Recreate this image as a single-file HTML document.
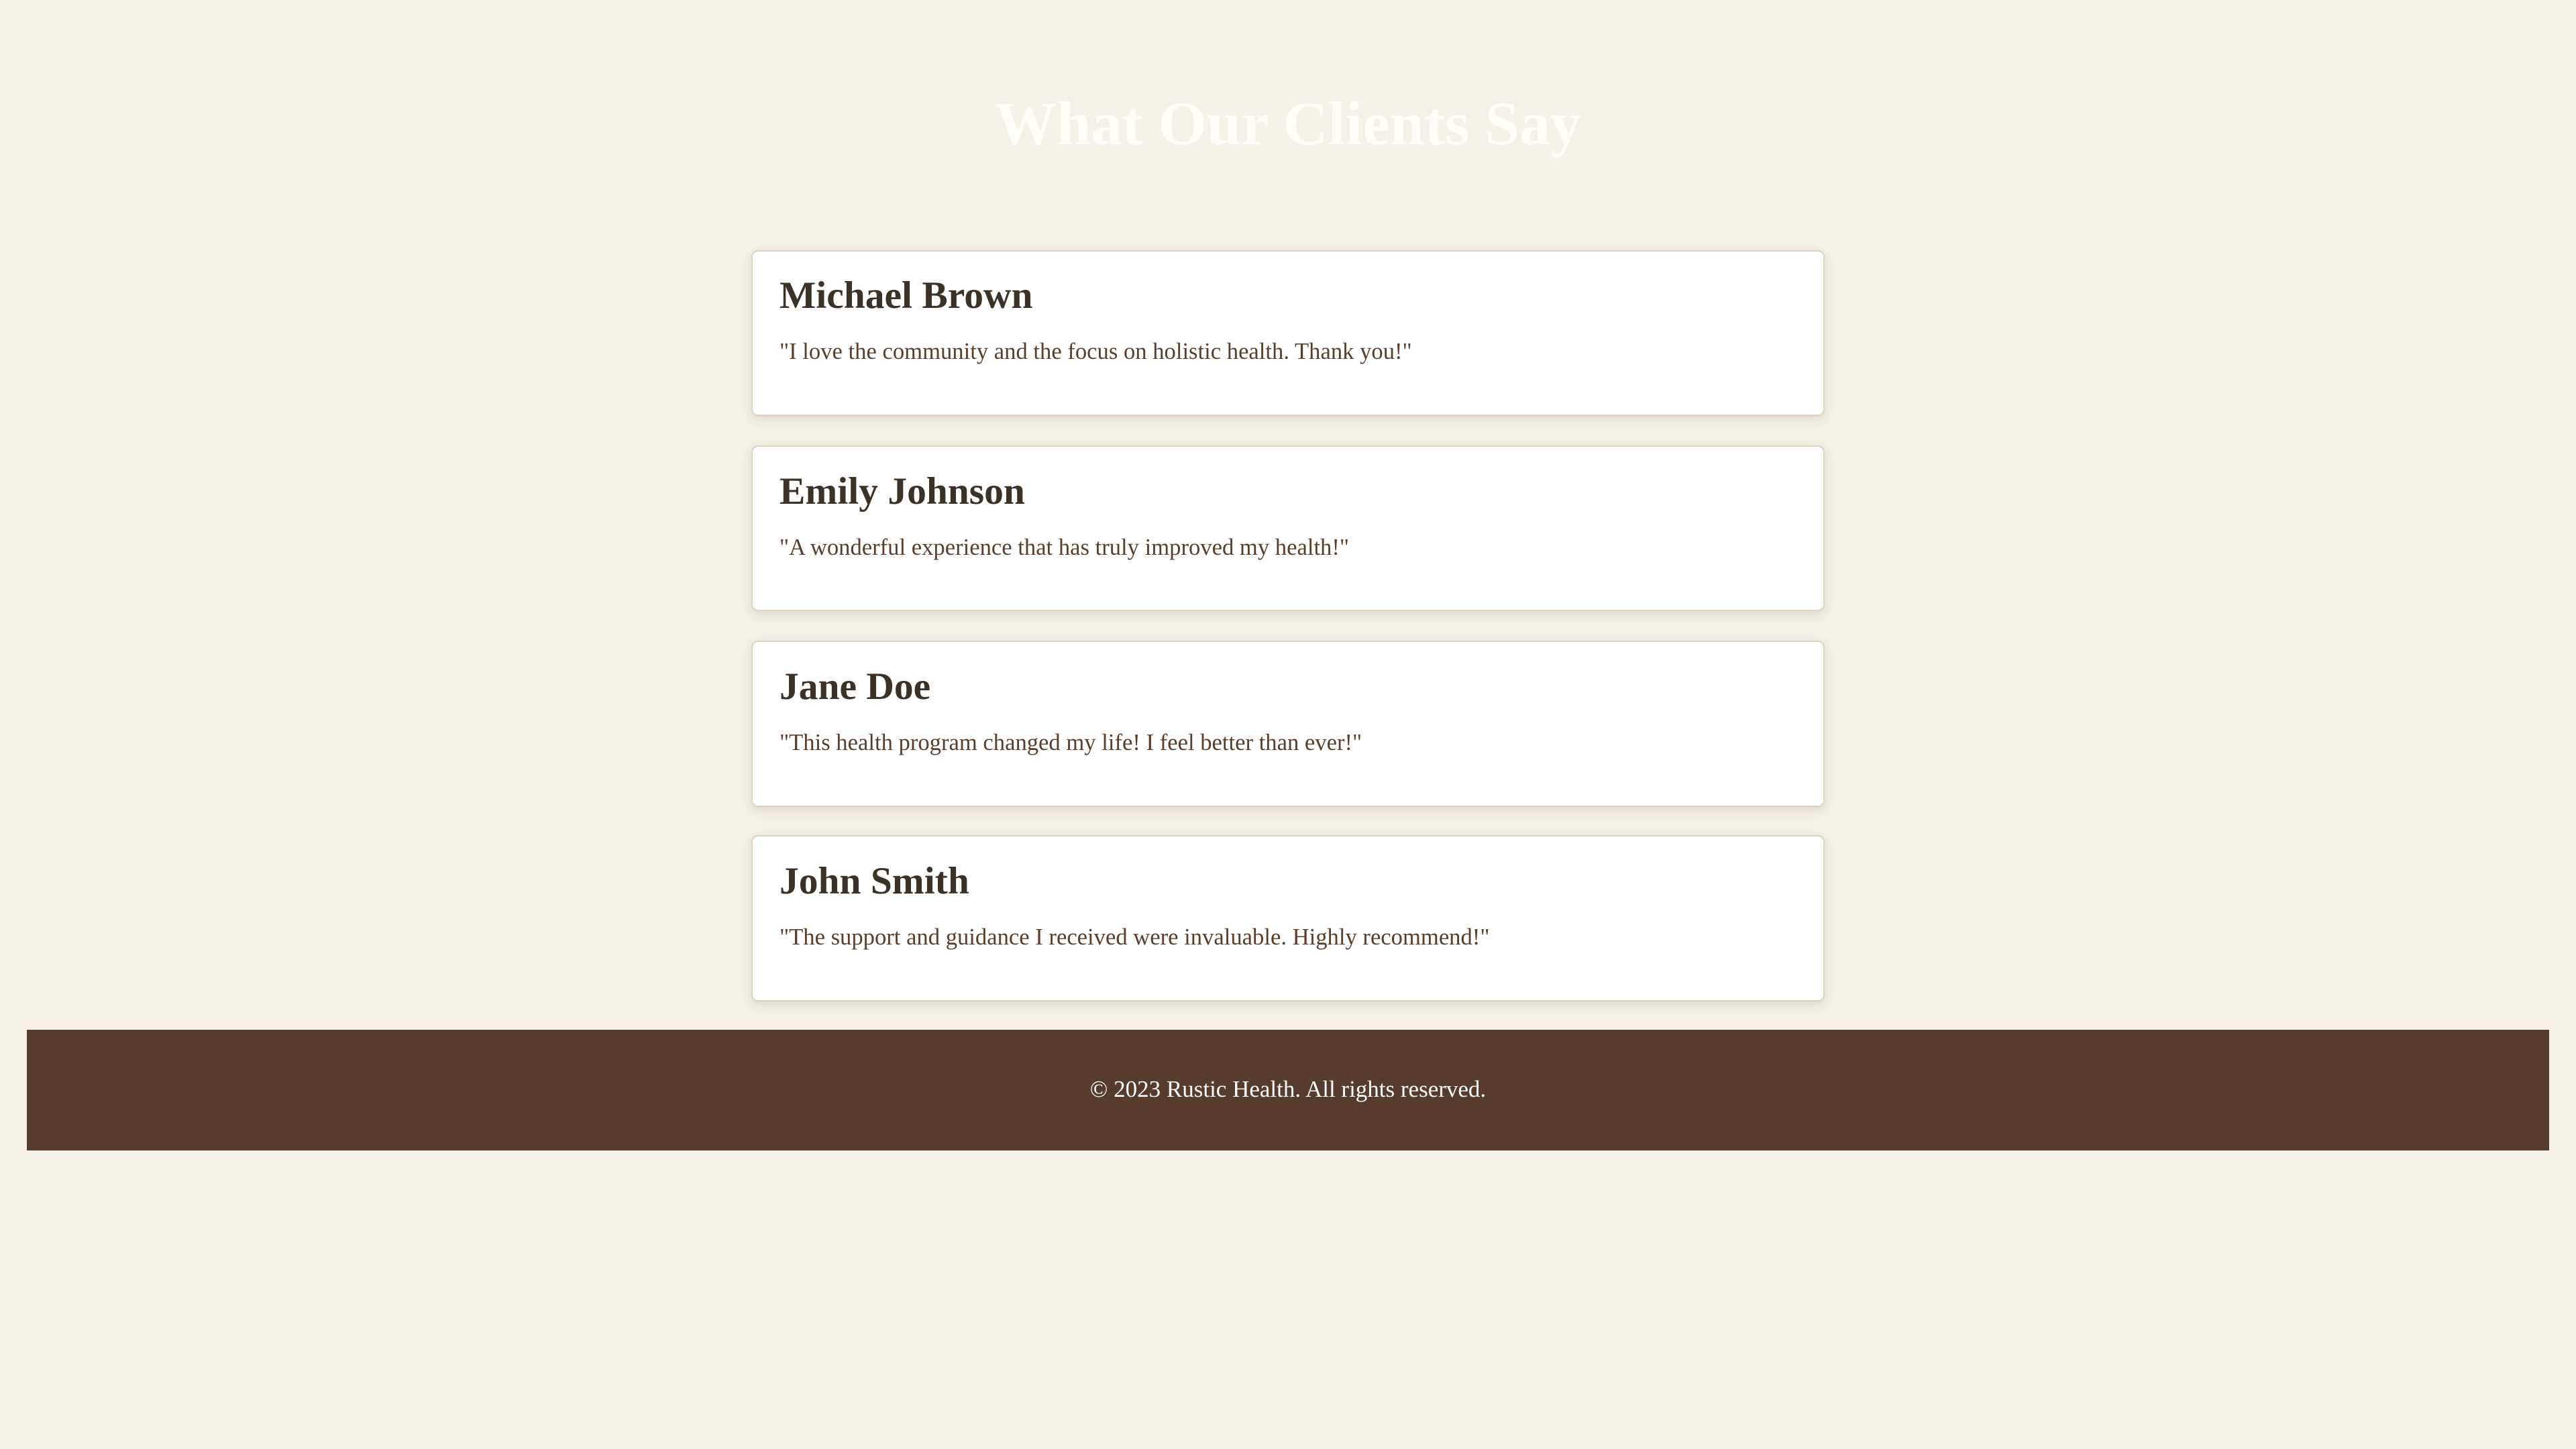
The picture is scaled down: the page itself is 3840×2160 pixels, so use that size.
<!DOCTYPE html>
<html><head><meta charset="utf-8"><style>
html,body{margin:0;padding:0}
body{width:3840px;height:2160px;background:#f5f1e7;font-family:"Liberation Serif","DejaVu Serif",serif;overflow:hidden;position:relative}
.wrap{zoom:2.5;width:1536px;height:864px;position:relative}
h1{position:absolute;left:0;width:1536px;margin:0;text-align:center;font-size:37px;line-height:37px;top:55.5px;color:#fffdf8;font-weight:bold}
.card{position:absolute;left:448px;width:640px;height:99px;box-sizing:border-box;background:#fff;border:1px solid #ddd3c2;border-radius:4px;box-shadow:0 2px 6px rgba(90,70,40,.15);padding:0 16px}
.card h3{margin:0;position:absolute;top:13.5px;left:16px;font-size:23px;line-height:26px;color:#3b3126;font-weight:bold}
.card p{margin:0;position:absolute;top:51.5px;left:16px;font-size:13.85px;line-height:17px;color:#5a3e2c}
footer{position:absolute;left:16px;top:614px;width:1504px;height:72px;background:#573c2e;color:#fff;text-align:center;font-size:14px;line-height:71px}
</style></head><body><div class="wrap">
<h1>What Our Clients Say</h1>
<div class="card" style="top:149px"><h3>Michael Brown</h3><p>"I love the community and the focus on holistic health. Thank you!"</p></div>
<div class="card" style="top:265.5px"><h3>Emily Johnson</h3><p>"A wonderful experience that has truly improved my health!"</p></div>
<div class="card" style="top:382px"><h3>Jane Doe</h3><p>"This health program changed my life! I feel better than ever!"</p></div>
<div class="card" style="top:498px"><h3>John Smith</h3><p>"The support and guidance I received were invaluable. Highly recommend!"</p></div>
<footer>© 2023 Rustic Health. All rights reserved.</footer>
</div></body></html>
